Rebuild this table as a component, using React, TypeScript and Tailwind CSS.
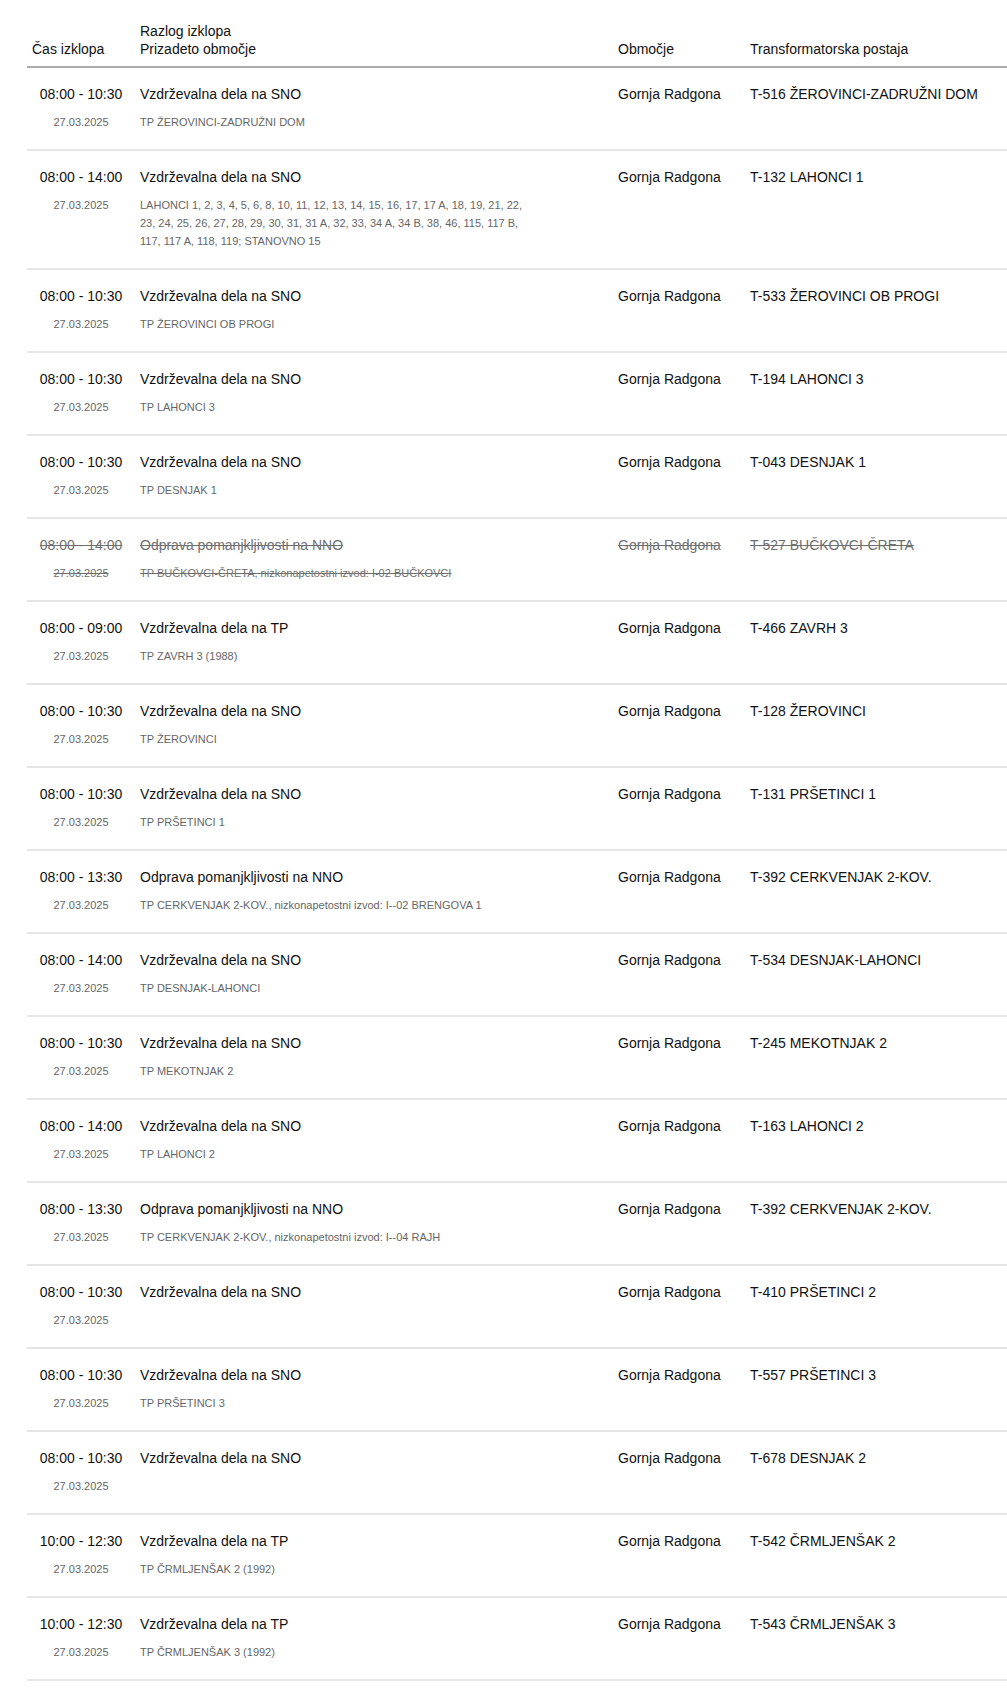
import React from "react";

type Row = {
  time: string;
  reason: string;
  detail: string;
  area: string;
  station: string;
  cancelled?: boolean;
};

const SNO = "Vzdrževalna dela na SNO";
const TP = "Vzdrževalna dela na TP";
const NNO = "Odprava pomanjkljivosti na NNO";
const GR = "Gornja Radgona";

const rows: Row[] = [
  { time: "08:00 - 10:30", reason: SNO, detail: "TP ŽEROVINCI-ZADRUŽNI DOM", area: GR, station: "T-516 ŽEROVINCI-ZADRUŽNI DOM" },
  {
    time: "08:00 - 14:00",
    reason: SNO,
    detail:
      "LAHONCI 1, 2, 3, 4, 5, 6, 8, 10, 11, 12, 13, 14, 15, 16, 17, 17 A, 18, 19, 21, 22, 23, 24, 25, 26, 27, 28, 29, 30, 31, 31 A, 32, 33, 34 A, 34 B, 38, 46, 115, 117 B, 117, 117 A, 118, 119; STANOVNO 15",
    area: GR,
    station: "T-132 LAHONCI 1",
  },
  { time: "08:00 - 10:30", reason: SNO, detail: "TP ŽEROVINCI OB PROGI", area: GR, station: "T-533 ŽEROVINCI OB PROGI" },
  { time: "08:00 - 10:30", reason: SNO, detail: "TP LAHONCI 3", area: GR, station: "T-194 LAHONCI 3" },
  { time: "08:00 - 10:30", reason: SNO, detail: "TP DESNJAK 1", area: GR, station: "T-043 DESNJAK 1" },
  {
    time: "08:00 - 14:00",
    reason: NNO,
    detail: "TP BUČKOVCI-ČRETA, nizkonapetostni izvod: I-02 BUČKOVCI",
    area: GR,
    station: "T-527 BUČKOVCI-ČRETA",
    cancelled: true,
  },
  { time: "08:00 - 09:00", reason: TP, detail: "TP ZAVRH 3 (1988)", area: GR, station: "T-466 ZAVRH 3" },
  { time: "08:00 - 10:30", reason: SNO, detail: "TP ŽEROVINCI", area: GR, station: "T-128 ŽEROVINCI" },
  { time: "08:00 - 10:30", reason: SNO, detail: "TP PRŠETINCI 1", area: GR, station: "T-131 PRŠETINCI 1" },
  {
    time: "08:00 - 13:30",
    reason: NNO,
    detail: "TP CERKVENJAK 2-KOV., nizkonapetostni izvod: I--02 BRENGOVA 1",
    area: GR,
    station: "T-392 CERKVENJAK 2-KOV.",
  },
  { time: "08:00 - 14:00", reason: SNO, detail: "TP DESNJAK-LAHONCI", area: GR, station: "T-534 DESNJAK-LAHONCI" },
  { time: "08:00 - 10:30", reason: SNO, detail: "TP MEKOTNJAK 2", area: GR, station: "T-245 MEKOTNJAK 2" },
  { time: "08:00 - 14:00", reason: SNO, detail: "TP LAHONCI 2", area: GR, station: "T-163 LAHONCI 2" },
  {
    time: "08:00 - 13:30",
    reason: NNO,
    detail: "TP CERKVENJAK 2-KOV., nizkonapetostni izvod: I--04 RAJH",
    area: GR,
    station: "T-392 CERKVENJAK 2-KOV.",
  },
  { time: "08:00 - 10:30", reason: SNO, detail: "", area: GR, station: "T-410 PRŠETINCI 2" },
  { time: "08:00 - 10:30", reason: SNO, detail: "TP PRŠETINCI 3", area: GR, station: "T-557 PRŠETINCI 3" },
  { time: "08:00 - 10:30", reason: SNO, detail: "", area: GR, station: "T-678 DESNJAK 2" },
  { time: "10:00 - 12:30", reason: TP, detail: "TP ČRMLJENŠAK 2 (1992)", area: GR, station: "T-542 ČRMLJENŠAK 2" },
  { time: "10:00 - 12:30", reason: TP, detail: "TP ČRMLJENŠAK 3 (1992)", area: GR, station: "T-543 ČRMLJENŠAK 3" },
];

export default function App() {
  return (
    <div className="bg-white min-h-[1693px] pt-[14px] pl-[27px] font-['Liberation_Sans',Arial,sans-serif] text-[14px] text-[#111]">
      <table className="w-[980px] table-fixed border-collapse">
        <colgroup>
          <col className="w-[108px]" />
          <col className="w-[478px]" />
          <col className="w-[132px]" />
          <col className="w-[262px]" />
        </colgroup>
        <thead>
          <tr className="border-b-2 border-[#acacac]">
            <th className="px-[5px] pt-2 pb-2 text-left align-bottom font-normal leading-[18px]">Čas izklopa</th>
            <th className="px-[5px] pt-2 pb-2 text-left align-bottom font-normal leading-[18px]">
              <div>Razlog izklopa</div>
              <div>Prizadeto območje</div>
            </th>
            <th className="px-[5px] pt-2 pb-2 text-left align-bottom font-normal leading-[18px]">Območje</th>
            <th className="px-[5px] pt-2 pb-2 text-left align-bottom font-normal leading-[18px]">Transformatorska postaja</th>
          </tr>
        </thead>
        <tbody>
          {rows.map((r, i) => {
            const main = r.cancelled ? "text-[#6f6f6f] line-through" : "text-[#111]";
            const sub = r.cancelled ? "text-[#6f6f6f] line-through" : "text-[#666]";
            return (
              <tr key={i} className="border-b-2 border-[#e6e6e6]">
                <td className="px-[5px] pt-[17px] pb-[18px] align-top text-center">
                  <div className={`leading-[18px] ${main}`}>{r.time}</div>
                  <div className={`mt-[10px] text-[11px] leading-[18px] ${sub}`}>27.03.2025</div>
                </td>
                <td className="px-[5px] pt-[17px] pb-[18px] align-top">
                  <div className={`leading-[18px] ${main}`}>{r.reason}</div>
                  {r.detail ? (
                    <div className={`mt-[10px] max-w-[392px] text-[11px] leading-[18px] ${sub}`}>{r.detail}</div>
                  ) : null}
                </td>
                <td className="px-[5px] pt-[17px] pb-[18px] align-top">
                  <div className={`leading-[18px] ${main}`}>{r.area}</div>
                </td>
                <td className="px-[5px] pt-[17px] pb-[18px] align-top">
                  <div className={`leading-[18px] ${main}`}>{r.station}</div>
                </td>
              </tr>
            );
          })}
        </tbody>
      </table>
    </div>
  );
}
